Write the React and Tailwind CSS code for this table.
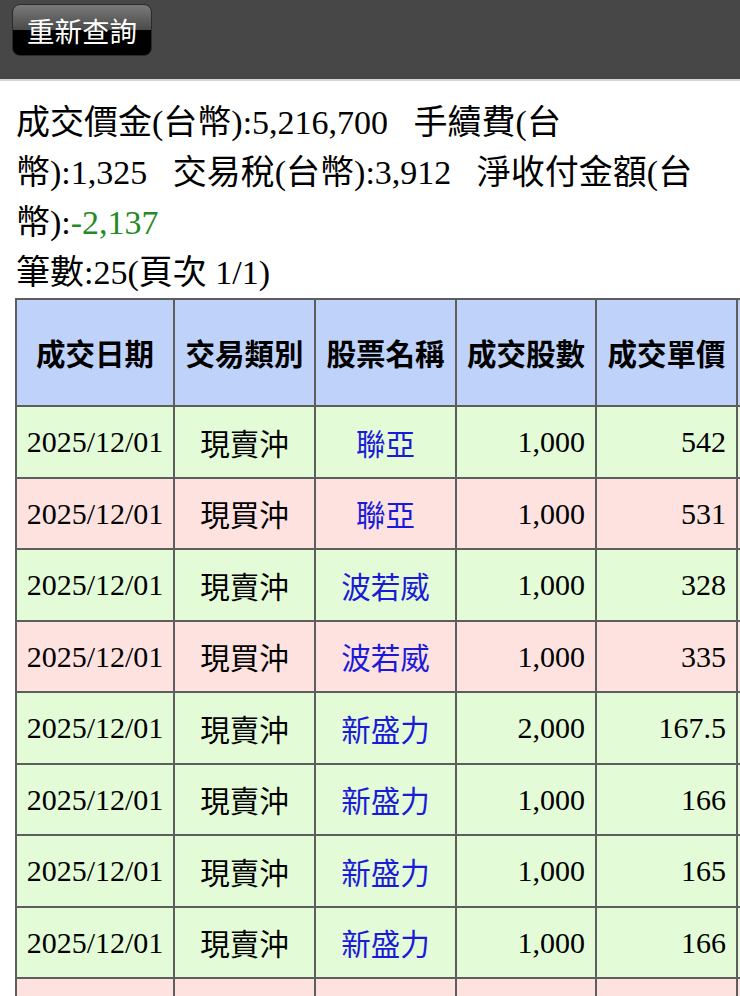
import React from "react";

const rows = [
  { c: "g", t: "現賣沖", n: "聯亞", q: "1,000", p: "542" },
  { c: "r", t: "現買沖", n: "聯亞", q: "1,000", p: "531" },
  { c: "g", t: "現賣沖", n: "波若威", q: "1,000", p: "328" },
  { c: "r", t: "現買沖", n: "波若威", q: "1,000", p: "335" },
  { c: "g", t: "現賣沖", n: "新盛力", q: "2,000", p: "167.5" },
  { c: "g", t: "現賣沖", n: "新盛力", q: "1,000", p: "166" },
  { c: "g", t: "現賣沖", n: "新盛力", q: "1,000", p: "165" },
  { c: "g", t: "現賣沖", n: "新盛力", q: "1,000", p: "166" },
];

const serif = "font-['Liberation_Serif','Noto_Sans_CJK_TC',serif]";
const sans = "font-['Noto_Sans_CJK_TC','Liberation_Sans',sans-serif]";
const cell = "border-2 border-[#5e5e5e]";

export default function App() {
  return (
    <div className="w-[740px] h-[996px] overflow-hidden bg-white">
      <div className="h-[81px] bg-[#474747] border-b-2 border-[#d4d4d4] pl-[12px] pt-[4px]">
        <button
          className={`w-[140px] h-[52px] rounded-[8px] border border-[#2a2a2a] bg-[linear-gradient(to_bottom,#7a7a7a_0%,#4a4a4a_50%,#000_50%,#000_100%)] text-white text-[27.5px] leading-[48px] ${sans}`}
        >
          重新查詢
        </button>
      </div>
      <div className={`pl-[16px] pt-[17px] text-[34px] leading-[50px] text-black whitespace-nowrap ${serif}`}>
        <div>成交價金(台幣):5,216,700&nbsp;&nbsp;&nbsp;手續費(台</div>
        <div>幣):1,325&nbsp;&nbsp;&nbsp;交易稅(台幣):3,912&nbsp;&nbsp;&nbsp;淨收付金額(台</div>
        <div>
          幣):<span className="text-[#258a25]">-2,137</span>
        </div>
        <div>筆數:25(頁次 1/1)</div>
      </div>
      <div className="pl-[15px]">
        <table className="border-collapse table-fixed w-[860px]">
          <colgroup>
            <col className="w-[158px]" />
            <col className="w-[141px]" />
            <col className="w-[141px]" />
            <col className="w-[140px]" />
            <col className="w-[141px]" />
            <col className="w-[139px]" />
          </colgroup>
          <thead>
            <tr className="h-[107px] bg-[#bfd2fa]">
              {["成交日期", "交易類別", "股票名稱", "成交股數", "成交單價"].map((h) => (
                <th
                  key={h}
                  className={`${cell} text-[29.5px] font-bold text-black text-center whitespace-nowrap ${sans}`}
                >
                  {h}
                </th>
              ))}
              <th className={cell}></th>
            </tr>
          </thead>
          <tbody>
            {rows.map((r, i) => (
              <tr key={i} className={`h-[71.5px] ${r.c === "g" ? "bg-[#e3fbd7]" : "bg-[#fde2e0]"}`}>
                <td className={`${cell} text-center text-[30px] text-black whitespace-nowrap ${serif}`}>
                  2025/12/01
                </td>
                <td className={`${cell} text-center text-[29.5px] text-black ${sans}`}>{r.t}</td>
                <td className={`${cell} text-center text-[29.5px] text-[#1a1ad8] ${sans}`}>{r.n}</td>
                <td className={`${cell} text-right pr-[10px] text-[30px] text-black ${serif}`}>{r.q}</td>
                <td className={`${cell} text-right pr-[10px] text-[30px] text-black ${serif}`}>{r.p}</td>
                <td className={cell}></td>
              </tr>
            ))}
            <tr className="h-[71.5px] bg-[#fde2e0]">
              <td className={cell}></td>
              <td className={cell}></td>
              <td className={cell}></td>
              <td className={cell}></td>
              <td className={cell}></td>
              <td className={cell}></td>
            </tr>
          </tbody>
        </table>
      </div>
    </div>
  );
}
